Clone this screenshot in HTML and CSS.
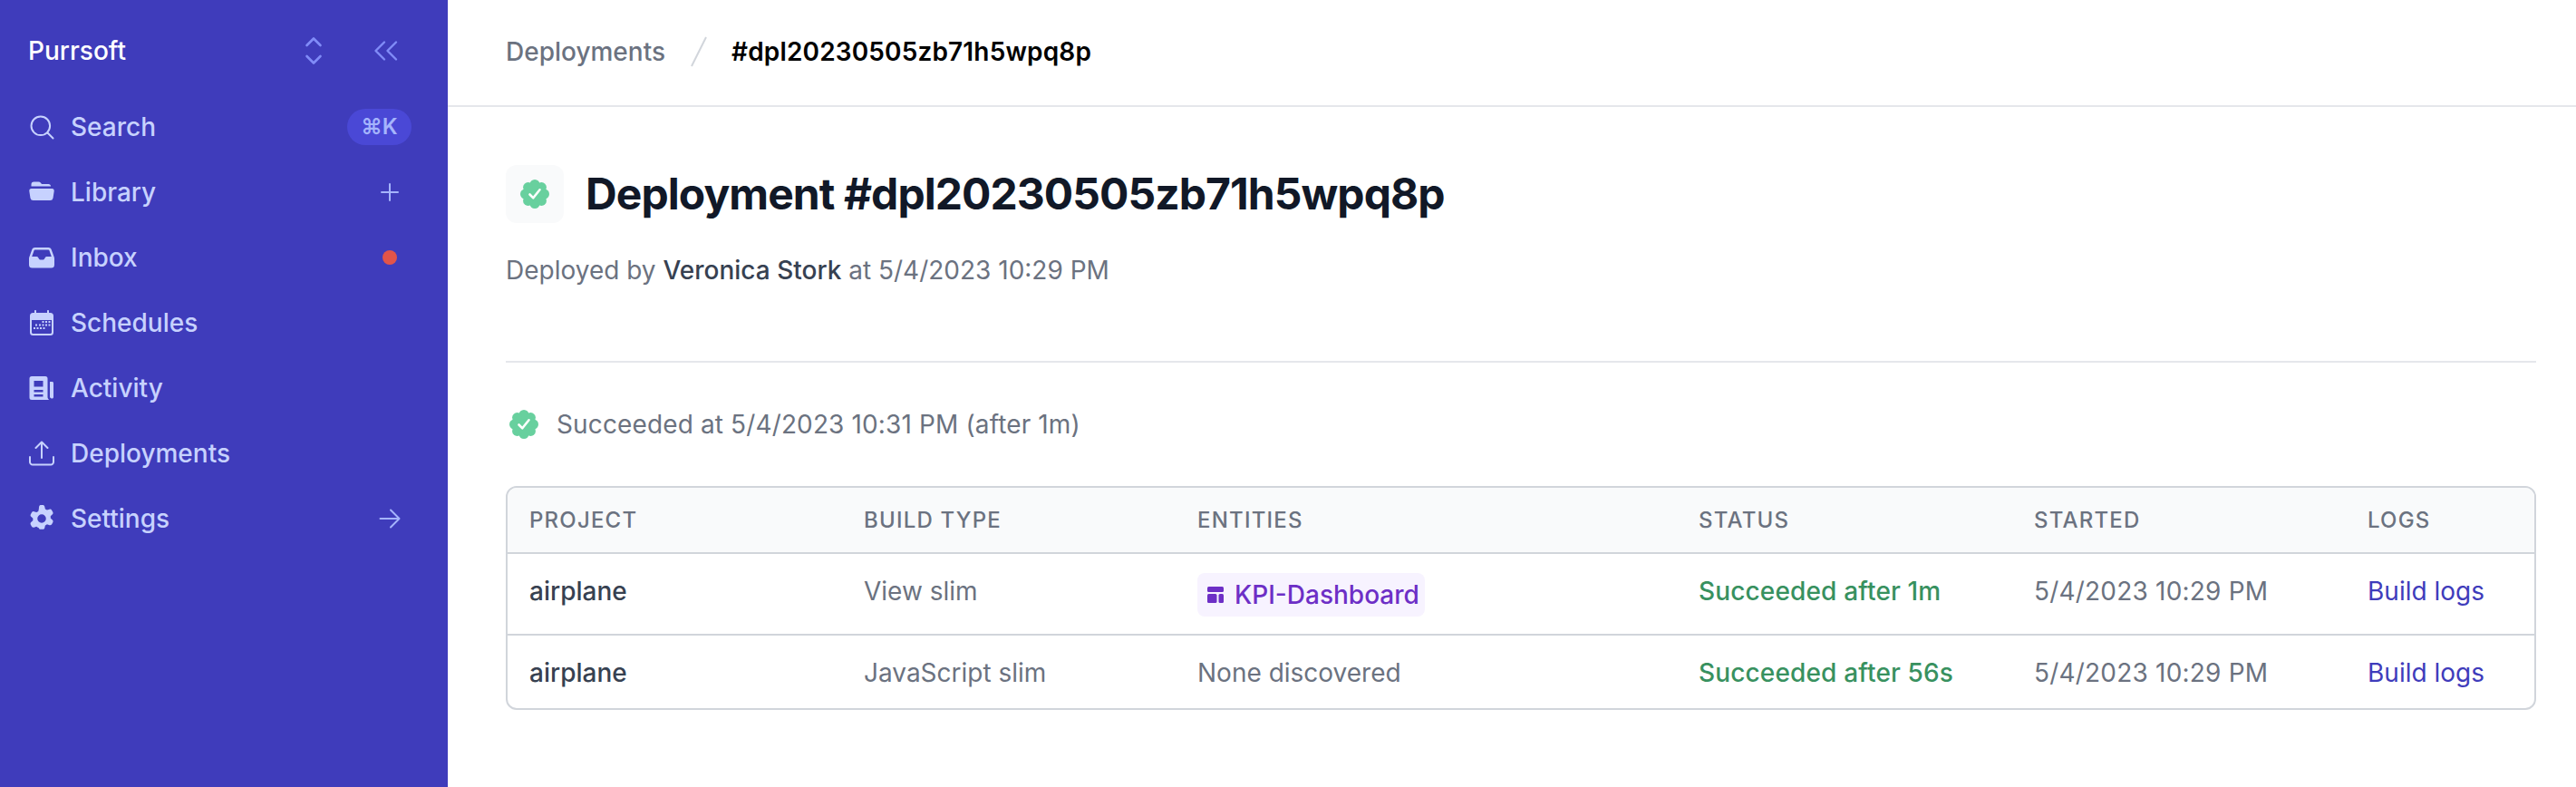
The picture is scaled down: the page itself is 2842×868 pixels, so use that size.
FILE: index.html
```html
<!DOCTYPE html>
<html lang="en">
<head>
<meta charset="utf-8">
<title>Deployment</title>
<link rel="stylesheet" href="styles.css">
</head>
<body>
<div class="app">
  <aside class="sidebar">
    <div class="brand">
      <span class="brand-name">Purrsoft</span>
      <svg class="brand-sort" viewBox="0 0 24 36" fill="none" stroke="currentColor" stroke-width="2.6" stroke-linecap="round" stroke-linejoin="round"><path d="M4.5 12 12 4.5 19.500 12M4.500 24 12 31.500 19.500 24"/></svg>
      <svg class="brand-collapse" viewBox="0 0 28 24" fill="none" stroke="currentColor" stroke-width="2.400" stroke-linecap="round" stroke-linejoin="round"><path d="M12 2.500 2.500 12 12 21.500M25 2.500 15.500 12 25 21.500"/></svg>
    </div>
    <nav class="nav">
      <a class="nav-item"><svg class="nav-icon" viewBox="0 0 28 28" fill="none" stroke="currentColor" stroke-width="2" stroke-linecap="round"><circle cx="12.800" cy="12.800" r="10.300"/><path d="m20.500 20.500 6 6"/></svg><span class="nav-label">Search</span><kbd class="kbd">⌘K</kbd></a>
      <a class="nav-item"><svg class="nav-icon" viewBox="0 0 28 28" fill="currentColor"><path d="M2.500 5.500A3 3 0 0 1 5.500 2.500h5c1 0 1.800.4 2.500 1.200l1 1.300h7.500c1.500 0 2.500 1 2.600 2.500H2.500z"/><path d="M2.500 10h23c1.400 0 2.400 1.300 2.200 2.700l-1.200 7.800a3.200 3.200 0 0 1-3.200 2.500H4.700a3.200 3.200 0 0 1-3.200-2.500L.3 12.700C.1 11.300 1.100 10 2.500 10z"/></svg><span class="nav-label">Library</span><svg class="nav-end" viewBox="0 0 22 22" fill="none" stroke="currentColor" stroke-width="2" stroke-linecap="round"><path d="M11 2v18M2 11h18"/></svg></a>
      <a class="nav-item"><svg class="nav-icon" viewBox="0 0 28 28" fill="currentColor"><path fill-rule="evenodd" d="M6.500 3h15c1.400 0 2.600.8 3.100 2.100l2.900 8c.3.700.5 1.400.5 2.100V22a3.500 3.500 0 0 1-3.500 3.500h-21A3.500 3.500 0 0 1-.000 22v-6.800c0-.7.200-1.400.5-2.100l2.900-8C3.900 3.800 5.100 3 6.500 3zm0 2.500c-.4 0-.8.300-.9.700L3.200 13h5.300c.7 0 1.300.3 1.600.9l.9 1.600c.3.600.900.900 1.500.900h3c.6 0 1.200-.3 1.500-.9l.9-1.600c.3-.6.900-.9 1.600-.9h5.300l-2.400-6.800c-.1-.4-.5-.7-.9-.7z"/></svg><span class="nav-label">Inbox</span><span class="dot"></span></a>
      <a class="nav-item"><svg class="nav-icon" viewBox="0 0 28 28" fill="currentColor"><path fill-rule="evenodd" d="M7 0c.6 0 1 .4 1 1v2h12V1c0-.6.400-1 1-1s1 .400 1 1v2h1.500A3.500 3.500 0 0 1 27 6.500v18a3.500 3.500 0 0 1-3.500 3.500h-19A3.500 3.500 0 0 1 1 24.500v-18A3.500 3.500 0 0 1 4.500 3H6V1c0-.6.4-1 1-1zM3 11v13.500c0 .8.700 1.500 1.500 1.500h19c.8 0 1.500-.7 1.500-1.500V11z"/><path d="M14.500 12h2v2h-2zM18 12h2v2h-2zM21.500 12h2v2h-2zM7 15.500h2v2H7zM11 15.500h2v2h-2zM14.500 15.500h2v2h-2zM18 15.500h2v2h-2zM21.500 15.500h2v2h-2zM5 19h2v2H5zM8.500 19h2v2h-2zM12 19h2v2h-2zM15.500 19h2v2h-2z"/></svg><span class="nav-label">Schedules</span></a>
      <a class="nav-item"><svg class="nav-icon" viewBox="0 0 28 28" fill="currentColor"><path fill-rule="evenodd" d="M3 1h15a2.500 2.500 0 0 1 2.500 2.500V24c0 1.100.6 2.200 1.500 2.800v.2H3a2.500 2.500 0 0 1-2.500-2.500v-21A2.500 2.500 0 0 1 3 1zm2.500 5v6.500h10V6zm0 10v2.500h10V16zm0 5v2.500h10V21z"/><path d="M23 7h2.500c.9 0 1.500.7 1.500 1.500V24c0 .8-.7 1.500-1.500 1.500S23 24.800 23 24z"/></svg><span class="nav-label">Activity</span></a>
      <a class="nav-item"><svg class="nav-icon" viewBox="0 0 28 28" fill="none" stroke="currentColor" stroke-width="2" stroke-linecap="round" stroke-linejoin="round"><path d="M1 18v5.500A3 3 0 0 0 4 26.500h20a3 3 0 0 0 3-3V18M14 19V2M7.500 8 14 1.500 20.500 8"/></svg><span class="nav-label">Deployments</span></a>
      <a class="nav-item"><svg class="nav-icon settings-icon" viewBox="0 0 24 24" fill="currentColor"><path fill-rule="evenodd" d="M11.100 0h1.800c.8 0 1.500.5 1.700 1.300l.5 2.200c.6.200 1.100.5 1.600.9l2.200-.7c.8-.2 1.600.1 2 .8l.9 1.600c.4.700.3 1.500-.3 2.100l-1.700 1.600c.1.600.1 1.200 0 1.800l1.700 1.600c.6.600.7 1.400.3 2.100l-.9 1.600c-.4.700-1.200 1-2 .8l-2.200-.7c-.5.4-1 .7-1.600.9l-.5 2.200c-.2.800-.9 1.300-1.700 1.300h-1.800c-.8 0-1.500-.5-1.700-1.300L9 19.900c-.6-.2-1.100-.5-1.600-.9l-2.200.7c-.8.2-1.600-.1-2-.8l-.9-1.600c-.4-.7-.3-1.500.3-2.100l1.700-1.600c-.1-.6-.1-1.200 0-1.800L2.600 10.200C2 9.600 1.900 8.800 2.300 8.100l.9-1.600c.4-.7 1.200-1 2-.8l2.200.7c.5-.4 1-.7 1.600-.9l.5-2.200C9.600.5 10.300 0 11.100 0zM12 8.200a3.800 3.800 0 1 0 0 7.600 3.800 3.800 0 0 0 0-7.600z"/></svg><span class="nav-label">Settings</span><svg class="nav-end arrow" viewBox="0 0 24 22" fill="none" stroke="currentColor" stroke-width="2" stroke-linecap="round" stroke-linejoin="round"><path d="M1.500 11h21M13 1.500 22.500 11 13 20.500"/></svg></a>
    </nav>
  </aside>
  <div class="content">
    <header class="topbar">
      <span class="crumb">Deployments</span>
      <svg class="crumb-sep" viewBox="0 0 18 34" fill="none" stroke="currentColor" stroke-width="2"><path d="M17 1 1 33"/></svg>
      <span class="crumb-current">#dpl20230505zb71h5wpq8p</span>
    </header>
    <main class="main">
      <div class="title-row">
        <div class="title-icon">
          <svg class="rosette" viewBox="0 0 32 32"><use href="#rosette"/></svg>
        </div>
        <h1 class="title">Deployment #dpl20230505zb71h5wpq8p</h1>
      </div>
      <p class="byline">Deployed by <strong>Veronica Stork</strong> at 5/4/2023 10:29 PM</p>
      <hr class="divider">
      <div class="status-row">
        <svg class="rosette" viewBox="0 0 32 32"><use href="#rosette"/></svg>
        <span class="status-text">Succeeded at 5/4/2023 10:31 PM (after 1m)</span>
      </div>
      <div class="table-wrap">
        <table class="table">
          <colgroup><col class="c1"><col class="c2"><col class="c3"><col class="c4"><col class="c5"><col class="c6"></colgroup>
          <thead>
            <tr><th>Project</th><th>Build type</th><th>Entities</th><th>Status</th><th>Started</th><th>Logs</th></tr>
          </thead>
          <tbody>
            <tr>
              <td class="project">airplane</td>
              <td>View slim</td>
              <td><a class="entity"><svg viewBox="0 0 18 18" fill="currentColor"><rect x="0" y="0" width="18" height="6" rx="1.500"/><rect x="0" y="8" width="10.500" height="10" rx="1.500"/><rect x="12.500" y="8" width="5.500" height="10" rx="1.500"/></svg>KPI-Dashboard</a></td>
              <td class="ok">Succeeded after 1m</td>
              <td class="date">5/4/2023 10:29 PM</td>
              <td><a class="link">Build logs</a></td>
            </tr>
            <tr>
              <td class="project">airplane</td>
              <td>JavaScript slim</td>
              <td>None discovered</td>
              <td class="ok">Succeeded after 56s</td>
              <td class="date">5/4/2023 10:29 PM</td>
              <td><a class="link">Build logs</a></td>
            </tr>
          </tbody>
        </table>
      </div>
    </main>
  </div>
</div>
<svg class="defs" width="0" height="0">
  <defs>
    <g id="rosette">
      <g fill="#68d09e">
        <circle cx="16" cy="16" r="12.500"/>
        <circle cx="16" cy="5.500" r="5.500"/>
        <circle cx="16" cy="26.500" r="5.500"/>
        <circle cx="5.500" cy="16" r="5.500"/>
        <circle cx="26.500" cy="16" r="5.500"/>
        <circle cx="8.600" cy="8.600" r="5.500"/>
        <circle cx="23.400" cy="8.600" r="5.500"/>
        <circle cx="8.600" cy="23.400" r="5.500"/>
        <circle cx="23.400" cy="23.400" r="5.500"/>
      </g>
      <path fill="none" stroke="#fff" stroke-width="2.600" stroke-linecap="round" stroke-linejoin="round" d="m10.500 16.500 3.800 3.800 7.200-9"/>
    </g>
  </defs>
</svg>
</body>
</html>
```
FILE: styles.css
```css
* { box-sizing: border-box; }
html, body { margin: 0; height: 100%; }
body { font-family: Inter, "Noto Sans", sans-serif; font-size: 28px; line-height: 40px; color: #6b7280; background: #fff; }
.app { display: flex; height: 868px; overflow: hidden; }
.sidebar { width: 494px; flex: none; background: #3f3cbb; color: #c7d2fe; display: flex; flex-direction: column; }
.brand { height: 112px; display: flex; align-items: center; padding-left: 31px; position: relative; }
.brand-name { color: #fff; font-weight: 500; flex: 1; }
.brand-sort { width: 24px; height: 36px; color: #818cf8; margin-right: 54px; }
.brand-collapse { width: 28px; height: 24px; color: #818cf8; margin-right: 54px; }
.nav { display: flex; flex-direction: column; margin-top: -8px; }
.nav-item { height: 72px; display: flex; align-items: center; padding: 0 40px 0 32px; font-weight: 500; }
.nav-icon { width: 28px; height: 28px; flex: none; margin-right: 18px; }
.settings-icon { width: 30px; height: 30px; margin: 0 17px 0 -1px; }
.nav-label { flex: 1; }
.kbd { width: 71px; height: 40px; margin-right: 0; border-radius: 20px; background: #4a48d6; color: #a5b4fc; font: 600 24px/40px Inter, "Noto Sans", sans-serif; text-align: center; }
.nav-end { width: 22px; height: 22px; color: #a5b4fc; margin-right: 13px; }
.nav-end.arrow { width: 24px; margin-right: 12px; }
.dot { width: 16px; height: 16px; border-radius: 50%; background: #e25449; margin-right: 16px; }
.content { flex: 1; display: flex; flex-direction: column; min-width: 0; }
.topbar { height: 118px; flex: none; display: flex; align-items: center; padding: 0 64px 2px; border-bottom: 2px solid #e5e7eb; }
.crumb { font-weight: 500; }
.crumb-sep { width: 18px; height: 34px; color: #d1d5db; margin: 0 27px 0 28px; }
.crumb-current { color: #000; font-weight: 600; letter-spacing: .15px; }
.main { flex: 1; padding: 64px 44px 0 64px; }
.title-row { display: flex; align-items: center; gap: 24px; }
.title-icon { width: 64px; height: 64px; border-radius: 12px; background: #f9fafb; display: flex; align-items: center; justify-content: center; }
.rosette { width: 32px; height: 32px; flex: none; }
.title { margin: 0; font-size: 48px; line-height: 64px; font-weight: 700; letter-spacing: -.94px; color: #111827; }
.byline { margin: 32px 0 0; }
.byline strong { font-weight: 500; color: #374151; }
.divider { border: 0; border-top: 2px solid #e5e7eb; margin: 80px 0 0; }
.status-row { margin-top: 48px; display: flex; align-items: center; gap: 20px; padding-left: 4px; }
.status-text { letter-spacing: .13px; }
.table-wrap { margin-top: 48px; border: 2px solid #d1d5db; border-radius: 12px; overflow: hidden; }
.table { width: 100%; border-collapse: collapse; table-layout: fixed; }
.c1 { width: 369px; }
.c2 { width: 368px; }
.c3 { width: 553px; }
.c4 { width: 370px; }
.c5 { width: 368px; }
.table th { background: #f9fafb; height: 72px; padding: 0 0 0 24px; text-align: left; font-size: 24px; line-height: 32px; font-weight: 500; letter-spacing: 1.200px; text-transform: uppercase; border-bottom: 2px solid #d1d5db; }
.table td { padding: 21px 0 19px 24px; vertical-align: top; border-top: 2px solid #d1d5db; }
.table tbody tr:first-child td { border-top: 0; }
.project { font-weight: 500; color: #374151; }
.table .ok { color: #38915f; font-weight: 500; letter-spacing: .15px; }
.date { letter-spacing: .2px; }
.link { color: #3f3cbb; }
.entity { display: inline-flex; align-items: center; height: 48px; padding: 0 6px 0 11px; border-radius: 8px; background: #f7f3ff; color: #6d2fc6; font-weight: 500; }
.entity svg { width: 18px; height: 18px; margin-right: 12px; }
.defs { position: absolute; }
```
